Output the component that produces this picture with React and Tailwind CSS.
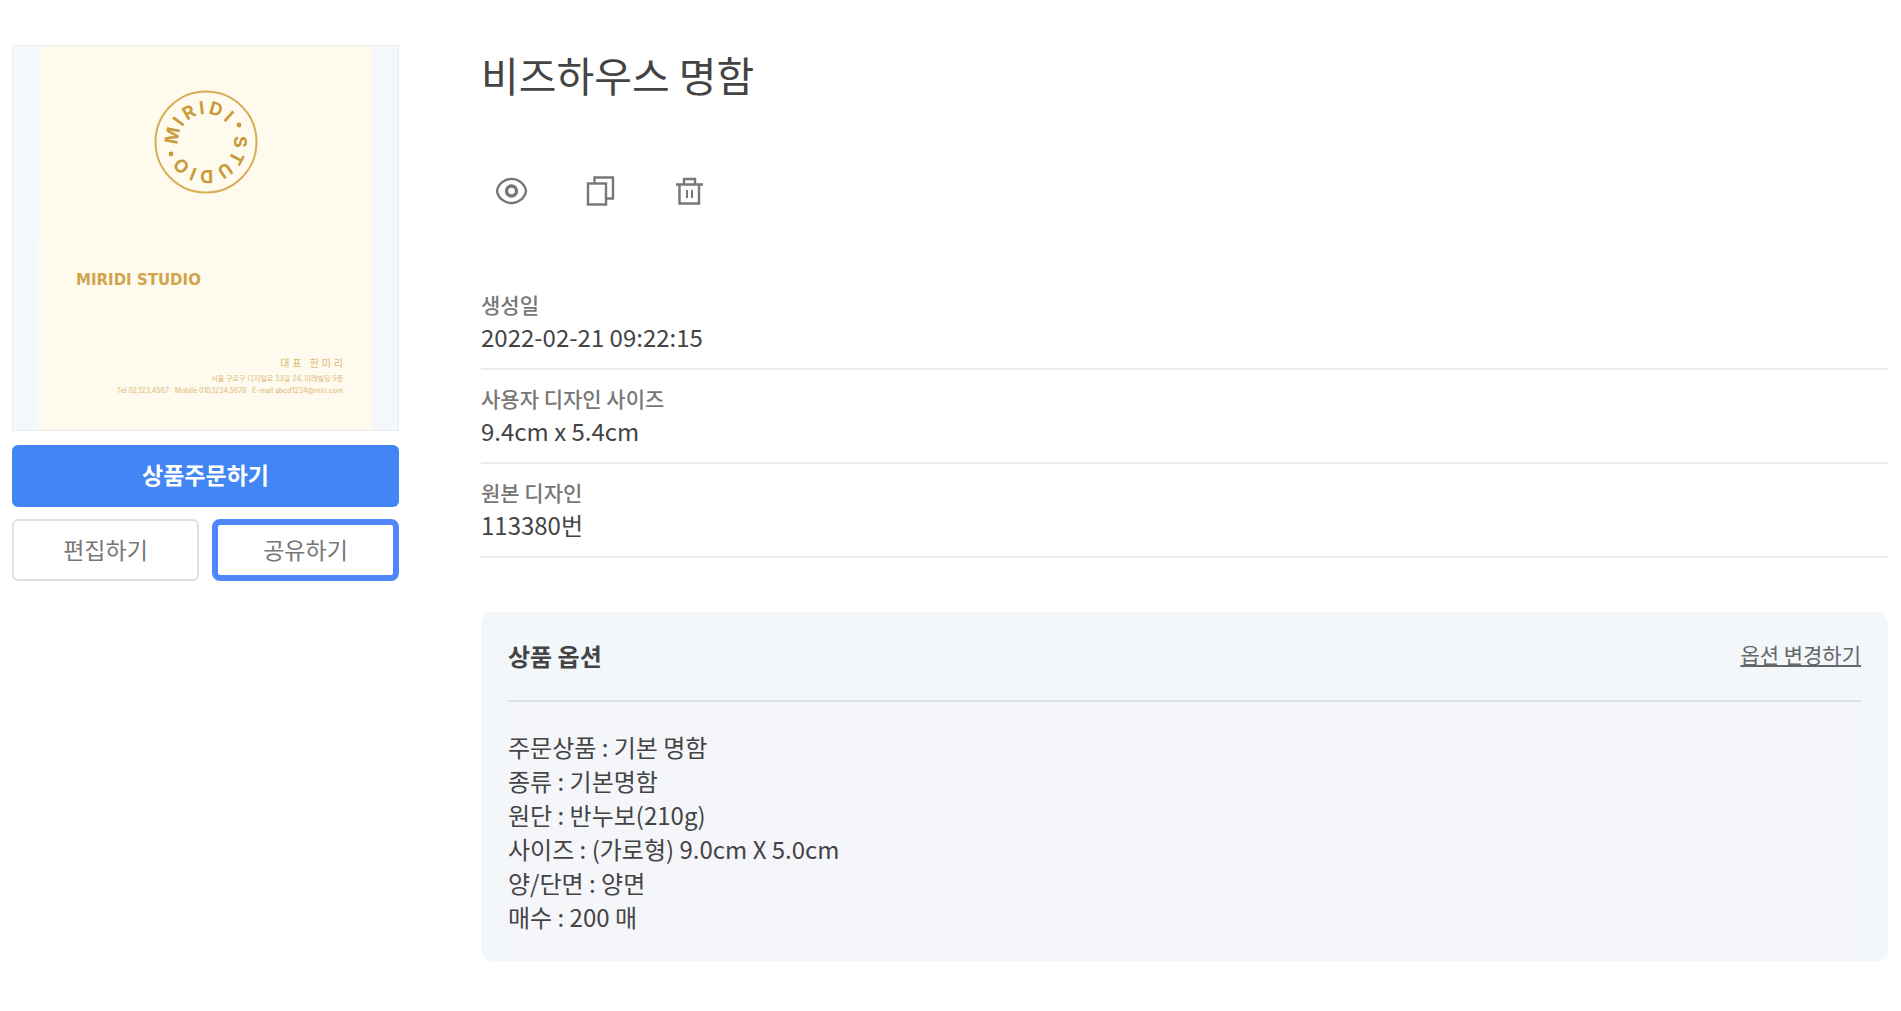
const RING = [
  { char: "M", angle: -79 },
  { char: "I", angle: -53 },
  { char: "R", angle: -30 },
  { char: "I", angle: -7 },
  { char: "D", angle: 17 },
  { char: "I", angle: 42 },
  { char: "S", angle: 90 },
  { char: "T", angle: 118 },
  { char: "U", angle: 146 },
  { char: "D", angle: 179 },
  { char: "I", angle: 202 },
  { char: "O", angle: 226 },
]

const INFO = [
  { label: "생성일", value: "2022-02-21 09:22:15" },
  { label: "사용자 디자인 사이즈", value: "9.4cm x 5.4cm" },
  { label: "원본 디자인", value: "113380번" },
]

const OPTIONS = [
  "주문상품 : 기본 명함",
  "종류 : 기본명함",
  "원단 : 반누보(210g)",
  "사이즈 : (가로형) 9.0cm X 5.0cm",
  "양/단면 : 양면",
  "매수 : 200 매",
]

function Logo() {
  return (
    <svg width="104" height="104" viewBox="-52 -52 104 104" role="img" aria-label="MIRIDI STUDIO">
      <circle r="50.5" fill="none" stroke="#d6ae58" strokeWidth="2" />
      {RING.map((item, i) => (
        <text
          key={i}
          y="-28"
          textAnchor="middle"
          transform={`rotate(${item.angle})`}
          className="font-['Inter',sans-serif] text-[18px] font-bold"
          fill="#c99b38"
        >
          {item.char}
        </text>
      ))}
      <circle cx="33" cy="-17" r="2.4" fill="#c99b38" />
      <circle cx="-35" cy="12" r="2.4" fill="#c99b38" />
    </svg>
  )
}

// Vista previa: anverso y reverso de la tarjeta
function Preview() {
  return (
    <div className="flex h-[386px] flex-col items-center border border-[#ececee] bg-[#f4f7fc]">
      <div className="flex h-1/2 w-[333px] items-center justify-center bg-[#fffaee]">
        <Logo />
      </div>
      <div className="flex h-1/2 w-[335px] flex-col justify-between bg-[#fffaee] pt-[30px] pr-[30px] pb-[33px] pl-[38px] text-[#d0a44a]">
        <p className="font-['DejaVu_Sans',sans-serif] text-[15px] leading-6 font-bold">MIRIDI STUDIO</p>
        <div className="text-right font-['Inter','Noto_Sans_CJK_KR',sans-serif] whitespace-nowrap text-[#dcb976]">
          <p className="mb-1 text-[10px] leading-3 whitespace-pre">대 표   한 미 리</p>
          <p className="text-[7px] leading-3">서울 구로구 디지털로 33길 24, 미래빌딩 5층</p>
          <p className="text-[7px] leading-3 whitespace-pre">Tel 02,123,4567   Mobile 010,1234,5678   E-mail abcd1234@miri.com</p>
        </div>
      </div>
    </div>
  )
}

function IconButton({ label, children }) {
  return (
    <button type="button" aria-label={label} className="flex size-[60px] items-center justify-center">
      <svg width="36" height="36" viewBox="0 0 36 36" fill="none" stroke="#777" strokeWidth="2.4">
        {children}
      </svg>
    </button>
  )
}

export default function App() {
  return (
    <div className="flex items-start gap-[82px] pt-[45px] pr-[13px] pb-12 pl-3 font-['Noto_Sans_CJK_KR',sans-serif] text-[#444]">
      <aside className="w-[387px] shrink-0">
        <Preview />
        <button type="button" className="mt-[14px] h-[62px] w-full rounded-md bg-[#4285f5] pb-1 text-[23px] font-bold text-white">
          상품주문하기
        </button>
        <div className="mt-3 grid grid-cols-2 gap-[13px] text-[23px] text-[#777]">
          <button type="button" className="h-[62px] rounded-md border-2 border-[#e0e0e0] pb-0.5">편집하기</button>
          <button type="button" className="h-[62px] rounded-lg border-6 border-[#4f86fb] pb-0.5">공유하기</button>
        </div>
      </aside>

      <main className="min-w-0 flex-1">
        <h1 className="text-[41px] leading-[58px]">비즈하우스 명함</h1>

        <div className="mt-[58px] flex gap-[29px]">
          <IconButton label="미리보기">
            <path d="M4 18C5 11 11.500 5.900 18.500 5.900S32 11 33 18C32 25 25.500 30.100 18.500 30.100S5 25 4 18Z" />
            <circle cx="18.500" cy="18" r="5" strokeWidth="3.4" />
          </IconButton>
          <IconButton label="복제">
            <rect x="6" y="10.500" width="18" height="21" />
            <path d="M12.500 10.500V4.500H31V25.500H24" />
          </IconButton>
          <IconButton label="삭제">
            <path d="M5 11.500H32M8.500 11.500V30.500H28V11.500M13 11.500V6H24V11.500" />
            <path d="M16 17V25M21 17V25" strokeWidth="2" />
          </IconButton>
        </div>

        <dl className="mt-[55px]">
          {INFO.map((row) => (
            <div key={row.label} className="border-b-2 border-[#eeeeef] pt-3 pb-[15px]">
              <dt className="text-[21px] leading-8 font-medium text-[#777]">{row.label}</dt>
              <dd className="text-[24px] leading-[33px]">{row.value}</dd>
            </div>
          ))}
        </dl>

        <section className="mt-[54px] overflow-hidden rounded-xl bg-[#f4f7fa] px-[27px]">
          <div className="flex h-[90px] items-center justify-between border-b-2 border-[#dfe1e4]">
            <h2 className="text-[24px] font-bold">상품 옵션</h2>
            <a href="#options" className="pb-0.5 text-[21px] text-[#666] underline">옵션 변경하기</a>
          </div>
          <ul className="bg-[#f5f6fa] pt-7 pb-[27px] text-[24px] leading-[34px]">
            {OPTIONS.map((text) => (
              <li key={text}>{text}</li>
            ))}
          </ul>
        </section>
      </main>
    </div>
  )
}
